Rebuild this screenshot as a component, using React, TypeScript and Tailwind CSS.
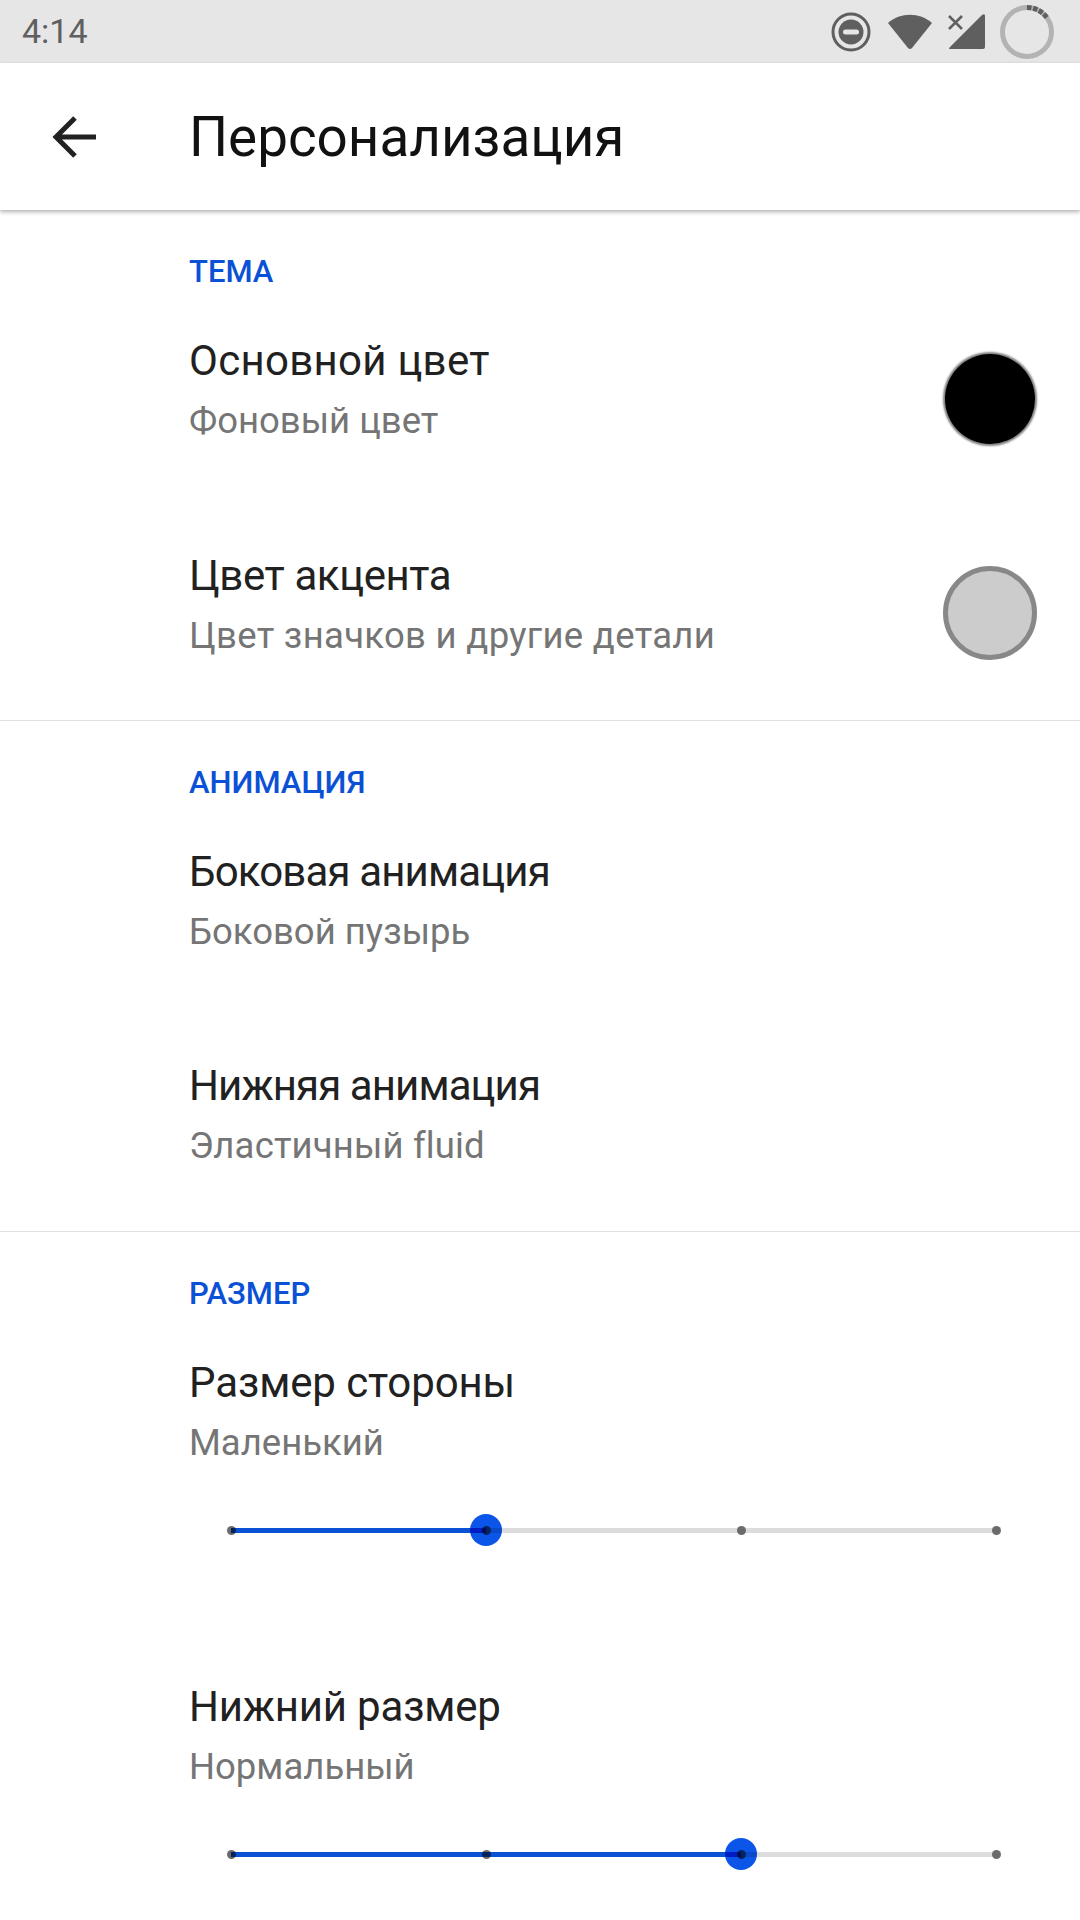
import React from 'react';

const font = { fontFamily: '"Roboto", "Noto Sans", sans-serif' };

function StatusIcons() {
  return (
    <div className="flex items-center">
      {/* Do not disturb */}
      <svg width="40" height="40" viewBox="0 0 40 40" className="mr-[16px]">
        <circle cx="20" cy="20" r="18" fill="none" stroke="#5f5f5f" strokeWidth="3" />
        <circle cx="20" cy="20" r="12.5" fill="#5f5f5f" />
        <rect x="12" y="17.5" width="16" height="5" rx="2.5" fill="#e6e6e6" />
      </svg>
      {/* Wifi */}
      <svg width="46" height="38" viewBox="0 0 46 38" className="mr-[15px]">
        <path d="M1 10 C13 -1 33 -1 45 10 L25 35 Q23 37 21 35 Z" fill="#5f5f5f" />
      </svg>
      {/* Signal */}
      <svg width="37" height="38" viewBox="0 0 37 38" className="mr-[15px]">
        <path d="M37 3 V34 Q37 36 35 36 H2 Q0 36 2 34 L34 2 Q37 0 37 3 Z" fill="#5f5f5f" />
        <path d="M1 3 L14 16 M14 3 L1 16" stroke="#5f5f5f" strokeWidth="2.5" />
      </svg>
      {/* Battery */}
      <svg width="54" height="54" viewBox="0 0 54 54">
        <circle cx="27" cy="27" r="24.5" fill="none" stroke="#b3b3b3" strokeWidth="5" />
        <path d="M27 2.5 A24.5 24.5 0 0 1 47.5 13.5" fill="none" stroke="#5f5f5f" strokeWidth="5" strokeDasharray="4.5 1.6" />
      </svg>
    </div>
  );
}

function SectionTitle({ children }: { children: React.ReactNode }) {
  return <div className="pl-[189px] text-[31px] leading-[40px] font-medium tracking-[0px] text-[#0b51d6]">{children}</div>;
}

function Row({ title, sub, titleClass = '', subClass = '' }: { title: string; sub: string; titleClass?: string; subClass?: string }) {
  return (
    <div>
      <div className={`text-[42px] leading-[48px] text-[#212121] ${titleClass}`}>{title}</div>
      <div className={`mt-[12px] text-[36.5px] leading-[48px] text-[#757575] ${subClass}`}>{sub}</div>
    </div>
  );
}

function Slider({ value }: { value: number }) {
  const ticks = [0, 1, 2, 3];
  const pos = (value / 3) * 100;
  return (
    <div className="relative ml-[231px] mr-[84px] h-[32px] flex items-center isolate">
      <div className="absolute right-0 h-[5px] bg-[#dcdcdc]" style={{ left: `${pos}%` }} />
      {ticks.map((t) => (
        <div
          key={t}
          className="absolute w-[9px] h-[9px] -ml-[4.5px] rounded-full bg-[#6b6b6b]"
          style={{ left: `${(t / 3) * 100}%` }}
        />
      ))}
      {/* multiply so the ticks show through as dark blue */}
      <div className="absolute left-0 h-[5px] bg-[#0b51d6] mix-blend-multiply" style={{ width: `${pos}%` }} />
      <div
        className="absolute w-[32px] h-[32px] -ml-[16px] rounded-full bg-[#0b55e8] mix-blend-multiply"
        style={{ left: `${pos}%` }}
      />
    </div>
  );
}

export default function App() {
  return (
    <div className="w-[1080px] h-[1920px] bg-white overflow-hidden flex flex-col" style={font}>
      {/* Status bar */}
      <div className="h-[63px] shrink-0 bg-[#e6e6e6] flex items-center justify-between pl-[22px] pr-[26px]">
        <span className="text-[34px] text-[#5f5f5f]">4:14</span>
        <StatusIcons />
      </div>

      {/* Toolbar */}
      <div className="h-[147px] shrink-0 flex items-center bg-white shadow-[0_2px_4px_rgba(0,0,0,0.3)] relative">
        <div className="w-[189px] shrink-0 pl-[52px]">
          <svg width="44" height="42" viewBox="0 0 44 42" fill="none" stroke="#212121" strokeWidth="5">
            <path d="M44 21 H4 M23 2 L4 21 L23 40" />
          </svg>
        </div>
        <h1 className="mt-[2px] text-[54.8px] font-normal text-[#111111]">Персонализация</h1>
      </div>

      {/* Тема */}
      <div className="pt-[42px] h-[511px] border-b border-[#e0e0e0] shrink-0">
        <SectionTitle>ТЕМА</SectionTitle>
        <div className="mt-[45px] pl-[189px] pr-[43px] flex justify-between">
          <Row title="Основной цвет" sub="Фоновый цвет" titleClass="tracking-[0.28px]" />
          <div className="mt-[17px] mr-[2px] w-[90px] h-[90px] rounded-full bg-black shadow-[0_0_2px_2px_#808080]" />
        </div>
        <div className="mt-[107px] pl-[189px] pr-[43px] flex justify-between">
          <Row title="Цвет акцента" sub="Цвет значков и другие детали" titleClass="tracking-[-0.4px]" subClass="tracking-[0.3px]" />
          <div className="mt-[14px] w-[94px] h-[94px] rounded-full bg-[#cccccc] border-[5px] border-[#888888]" />
        </div>
      </div>

      {/* Анимация */}
      <div className="pt-[42px] h-[511px] border-b border-[#e0e0e0] shrink-0">
        <SectionTitle>АНИМАЦИЯ</SectionTitle>
        <div className="mt-[45px] pl-[189px]">
          <Row title="Боковая анимация" sub="Боковой пузырь" titleClass="tracking-[-0.85px]" />
        </div>
        <div className="mt-[106px] pl-[189px]">
          <Row title="Нижняя анимация" sub="Эластичный fluid" titleClass="tracking-[-0.9px]" subClass="tracking-[0.15px]" />
        </div>
      </div>

      {/* Размер */}
      <div className="pt-[42px] shrink-0">
        <SectionTitle>РАЗМЕР</SectionTitle>
        <div className="mt-[45px] pl-[189px]">
          <Row title="Размер стороны" sub="Маленький" titleClass="tracking-[-0.1px]" />
        </div>
        <div className="mt-[47px]">
          <Slider value={1} />
        </div>
        <div className="mt-[137px] pl-[189px]">
          <Row title="Нижний размер" sub="Нормальный" titleClass="tracking-[-0.2px]" />
        </div>
        <div className="mt-[47px]">
          <Slider value={2} />
        </div>
      </div>
    </div>
  );
}
